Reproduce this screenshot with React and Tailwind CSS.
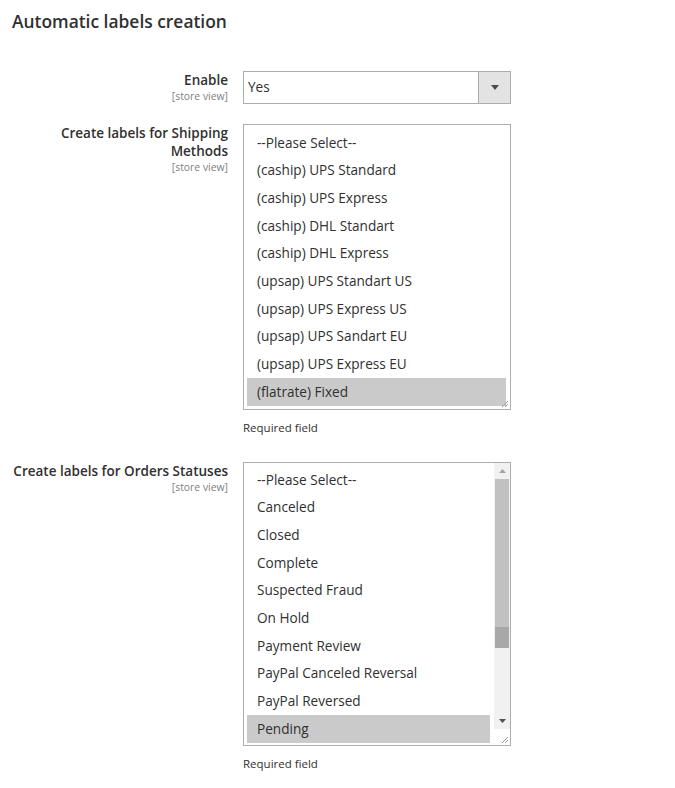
import React from "react";

const font = { fontFamily: '"Open Sans", "Noto Sans", sans-serif' };

function Resize() {
  return (
    <svg width="7" height="7" viewBox="0 0 7 7" className="absolute right-[2px] bottom-[2px]">
      <line x1="1" y1="7" x2="7" y2="1" stroke="#9a9a9a" strokeWidth="1" />
      <line x1="4" y1="7" x2="7" y2="4" stroke="#9a9a9a" strokeWidth="1" />
    </svg>
  );
}

function Label({ lines }) {
  return (
    <div className="w-[228px] shrink-0 text-right pl-3">
      <div className="text-[13.5px] leading-[18px] font-semibold text-[#303030]">
        {lines.map((l, i) => (
          <div key={i}>{l}</div>
        ))}
      </div>
      <div className="text-[10.4px] leading-[15px] text-[#808080]">[store view]</div>
    </div>
  );
}

function Option({ text, selected }) {
  return (
    <div
      className={
        "h-[27.67px] flex items-center pl-[10px] text-[13.6px] text-[#303030] " +
        (selected ? "bg-[#cacaca]" : "")
      }
    >
      {text}
    </div>
  );
}

export default function App() {
  const ship = [
    "--Please Select--",
    "(caship) UPS Standard",
    "(caship) UPS Express",
    "(caship) DHL Standart",
    "(caship) DHL Express",
    "(upsap) UPS Standart US",
    "(upsap) UPS Express US",
    "(upsap) UPS Sandart EU",
    "(upsap) UPS Express EU",
    "(flatrate) Fixed",
  ];
  const statuses = [
    "--Please Select--",
    "Canceled",
    "Closed",
    "Complete",
    "Suspected Fraud",
    "On Hold",
    "Payment Review",
    "PayPal Canceled Reversal",
    "PayPal Reversed",
    "Pending",
  ];
  return (
    <div className="w-[675px] h-[788px] bg-white" style={font}>
      <div className="pl-3 pt-[9px] text-[17.4px] leading-[24px] font-semibold text-[#303030]">
        Automatic labels creation
      </div>

      <div className="flex gap-[15px] mt-[38px]">
        <Label lines={["Enable"]} />
        <div className="w-[268px] h-[33px] border border-[#adadad] flex">
          <div className="flex-1 flex items-center pl-[4px] text-[13.6px] text-[#303030]">Yes</div>
          <div className="w-[32px] bg-[#e3e3e3] border-l border-[#adadad] flex items-center justify-center">
            <svg width="8" height="5" viewBox="0 0 8 5">
              <polygon points="0,0 8,0 4,5" fill="#514943" />
            </svg>
          </div>
        </div>
      </div>

      <div className="flex gap-[15px] mt-[20px]">
        <Label lines={["Create labels for Shipping", "Methods"]} />
        <div>
          <div className="relative w-[268px] h-[286px] border border-[#adadad] pt-[4px] pl-[3px] pr-[4px]">
            {ship.map((t, i) => (
              <Option key={i} text={t} selected={i === ship.length - 1} />
            ))}
            <Resize />
          </div>
          <div className="mt-[10px] text-[11.5px] leading-[15px] text-[#303030]">Required field</div>
        </div>
      </div>

      <div className="flex gap-[15px] mt-[27px]">
        <Label lines={["Create labels for Orders Statuses"]} />
        <div>
          <div className="relative w-[268px] h-[284px] border border-[#adadad] flex">
            <div className="flex-1 pt-[3px] pl-[3px] pr-[4px]">
              {statuses.map((t, i) => (
                <Option key={i} text={t} selected={i === statuses.length - 1} />
              ))}
            </div>
            <div className="w-[16px] bg-[#f1f1f1] flex flex-col">
              <div className="h-[16px] flex items-center justify-center">
                <svg width="7" height="4" viewBox="0 0 7 4">
                  <polygon points="0,4 7,4 3.5,0" fill="#a3a3a3" />
                </svg>
              </div>
              <div className="mx-[1px] h-[148px] bg-[#c1c1c1]" />
              <div className="mx-[1px] h-[21px] bg-[#a8a8a8]" />
              <div className="flex-1" />
              <div className="h-[16px] flex items-center justify-center">
                <svg width="7" height="4" viewBox="0 0 7 4">
                  <polygon points="0,0 7,0 3.5,4" fill="#505050" />
                </svg>
              </div>
              <div className="h-[16px] bg-white relative">
                <Resize />
              </div>
            </div>
          </div>
          <div className="mt-[10px] text-[11.5px] leading-[15px] text-[#303030]">Required field</div>
        </div>
      </div>
    </div>
  );
}
